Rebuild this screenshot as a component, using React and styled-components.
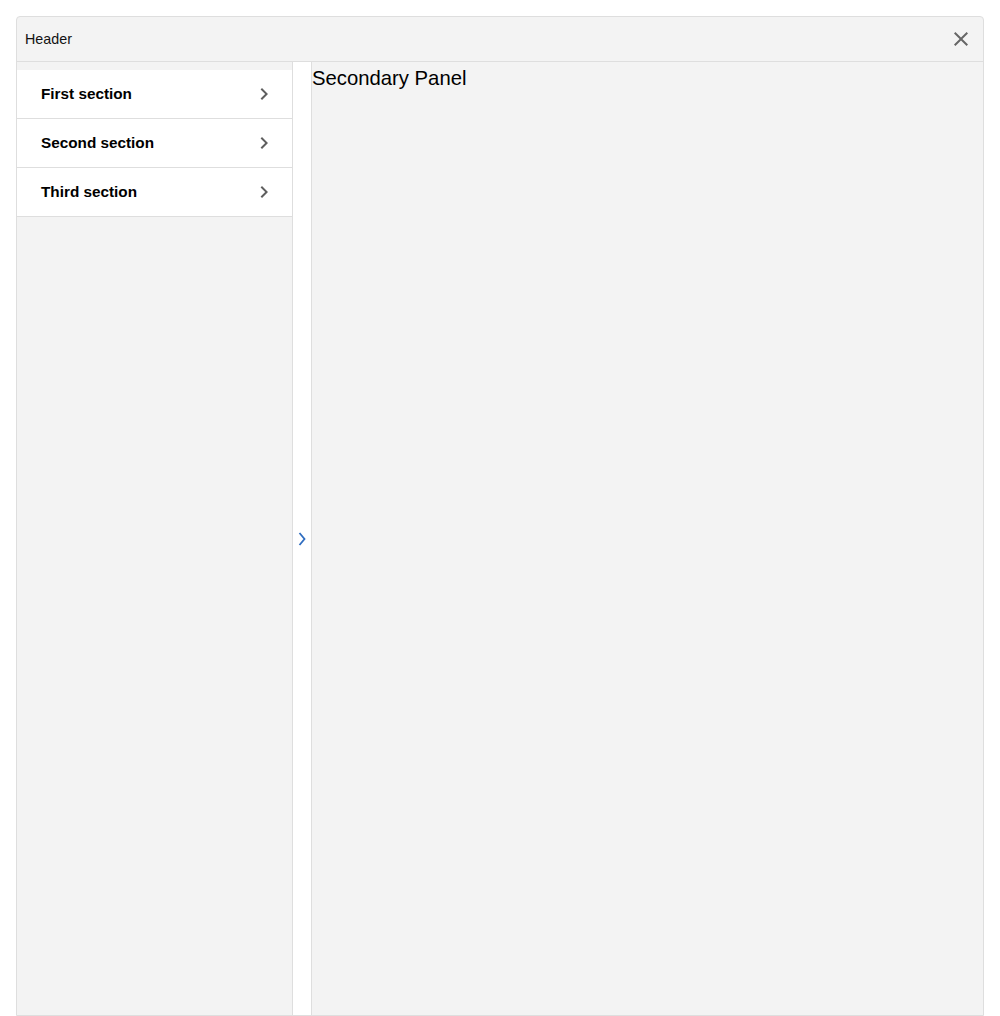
import React from "react";
import styled, { createGlobalStyle } from "styled-components";

const Global = createGlobalStyle`
  * { box-sizing: border-box; }
  html, body { margin: 0; padding: 0; background: #ffffff; }
  body { font-family: "Liberation Sans", Arial, sans-serif; color: #111; }
`;

const Frame = styled.div`
  margin: 16px 16px 0 16px;
  height: 1000px;
  border: 1px solid #dedede;
  border-radius: 4px 4px 0 0;
  background: #f3f3f3;
  display: flex;
  flex-direction: column;
  overflow: hidden;
`;

const Header = styled.header`
  height: 45px;
  flex: none;
  border-bottom: 1px solid #dedede;
  display: flex;
  align-items: center;
  justify-content: space-between;
  padding: 0 10px 0 8px;
`;

const Title = styled.span`
  font-size: 14.3px;
  color: #111;
`;

const IconButton = styled.button`
  width: 24px;
  height: 24px;
  padding: 0;
  border: none;
  background: transparent;
  display: flex;
  align-items: center;
  justify-content: center;
  color: #666;
  cursor: pointer;
`;

const Body = styled.div`
  flex: 1;
  display: flex;
  min-height: 0;
`;

const Sidebar = styled.nav`
  width: 276px;
  flex: none;
  border-right: 1px solid #dedede;
  padding-top: 8px;
  background: #f3f3f3;
`;

const List = styled.ul`
  list-style: none;
  margin: 0;
  padding: 0;
`;

const Item = styled.li`
  height: 49px;
  background: #ffffff;
  border-bottom: 1px solid #dedede;
  display: flex;
  align-items: center;
  justify-content: space-between;
  padding: 0 16px 1px 24px;
  font-size: 15.3px;
  font-weight: bold;
  color: #000;
`;

const Chevron = styled.span`
  width: 24px;
  height: 24px;
  display: flex;
  color: #5f5f5f;
`;

const Strip = styled.div`
  width: 19px;
  flex: none;
  background: #ffffff;
  border-right: 1px solid #dedede;
  display: flex;
  align-items: center;
  justify-content: center;
  color: #2f6dc0;
`;

const Panel = styled.main`
  flex: 1;
  background: #f3f3f3;
`;

const PanelTitle = styled.h2`
  margin: 0;
  font-size: 20.3px;
  font-weight: normal;
  line-height: 32px;
  color: #000;
`;

const ChevronRight = () => (
  <svg width="24" height="24" viewBox="0 0 24 24" fill="currentColor">
    <path d="M10 6L8.59 7.41 13.17 12l-4.58 4.59L10 18l6-6z" />
  </svg>
);

const CloseIcon = () => (
  <svg width="24" height="24" viewBox="0 0 24 24" fill="currentColor">
    <path d="M19 6.41L17.59 5 12 10.59 6.41 5 5 6.41 10.59 12 5 17.59 6.41 19 12 13.41 17.59 19 19 17.59 13.41 12z" />
  </svg>
);

const sections = ["First section", "Second section", "Third section"];

export default function App() {
  return (
    <>
      <Global />
      <Frame>
        <Header>
          <Title>Header</Title>
          <IconButton aria-label="Close">
            <CloseIcon />
          </IconButton>
        </Header>
        <Body>
          <Sidebar>
            <List>
              {sections.map((s) => (
                <Item key={s}>
                  {s}
                  <Chevron>
                    <ChevronRight />
                  </Chevron>
                </Item>
              ))}
            </List>
          </Sidebar>
          <Strip>
            <svg width="10" height="16" viewBox="0 0 10 16" fill="none">
              <polyline points="2.5,2 7.5,8 2.5,14" stroke="currentColor" strokeWidth="1.8" />
            </svg>
          </Strip>
          <Panel>
            <PanelTitle>Secondary Panel</PanelTitle>
          </Panel>
        </Body>
      </Frame>
    </>
  );
}
